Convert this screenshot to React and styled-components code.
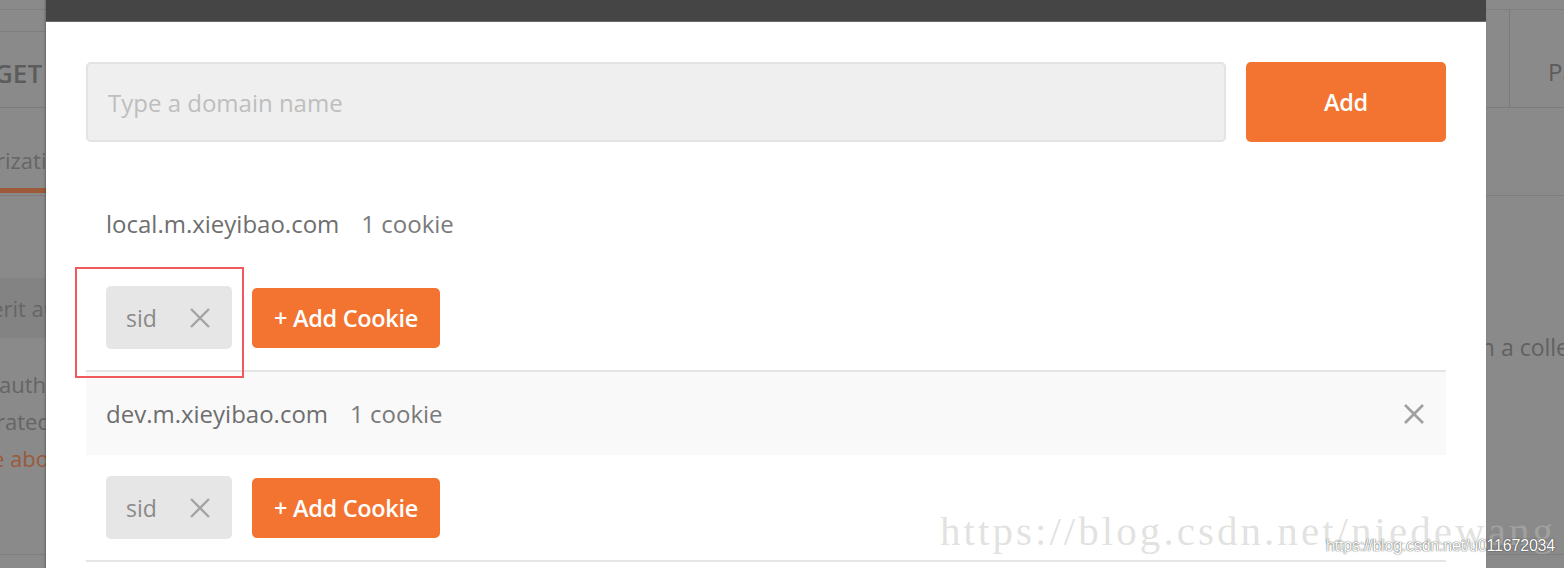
import React from 'react';
import styled, { createGlobalStyle } from 'styled-components';

const GlobalStyle = createGlobalStyle`
  html, body {
    margin: 0;
    padding: 0;
    overflow: hidden;
    background: #8a8a8a;
  }
  * {
    box-sizing: border-box;
  }
`;

const ORANGE = '#f27430';

const Page = styled.div`
  position: relative;
  width: 1564px;
  height: 568px;
  overflow: hidden;
  font-family: "Open Sans", "Liberation Sans", sans-serif;
`;

/* dimmed app behind the modal */
const AppBg = styled.div`
  display: flex;
  flex-direction: column;
  width: 100%;
  height: 100%;
  background: #8a8a8a;
  color: #5e5e5e;
  font-size: 22px;
`;

const TabStrip = styled.div`
  height: 10px;
  border-bottom: 1px solid #7e7e7e;
`;

const RequestBar = styled.div`
  height: 98px;
  display: flex;
  justify-content: space-between;
  border-bottom: 1px solid #7b7b7b;
`;

const MethodBox = styled.div`
  margin-top: 21px;
  width: 120px;
  border-top: 1px solid #7e7e7e;
  display: flex;
  align-items: center;
  padding-top: 6px;
  font-size: 26px;
  font-weight: 600;
  color: #5c5c5c;
  span {
    margin-left: -6px;
  }
`;

const ParamsButton = styled.div`
  width: 55px;
  border-left: 1px solid #7b7b7b;
  display: flex;
  align-items: center;
  padding-left: 38px;
  padding-top: 25px;
  font-size: 24px;
  color: #5c5c5c;
  white-space: nowrap;
`;

const TabsRow = styled.div`
  height: 88px;
  display: flex;
  border-bottom: 1px solid #7d7d7d;
`;

const Tab = styled.div`
  height: 85px;
  margin-left: -66px;
  padding: 0 20px 13px 0;
  display: flex;
  align-items: flex-end;
  border-bottom: 5px solid ${(p) => (p.$active ? '#9c5a38' : 'transparent')};
  color: #666;
  white-space: nowrap;
`;

const Content = styled.div`
  flex: 1;
  display: grid;
  grid-template-columns: 1475px 1fr;
  border-bottom: 1px solid #7e7e7e;
  margin-bottom: 13px;
`;

const LeftPane = styled.div`
  padding-top: 82px;
  display: flex;
  flex-direction: column;
`;

const InheritBand = styled.div`
  height: 60px;
  background: #838383;
  display: flex;
  align-items: center;
  margin-bottom: 28px;
  color: #666;
  white-space: nowrap;
  span {
    margin-left: -42px;
  }
`;

const HelpLine = styled.div`
  height: 37px;
  line-height: 37px;
  white-space: nowrap;
  color: ${(p) => (p.$link ? '#9b5a3a' : '#656565')};
  margin-left: ${(p) => p.$shift}px;
`;

const RightPane = styled.div`
  padding-top: 135px;
  white-space: nowrap;
  color: #616161;
  font-size: 23px;
`;

/* modal */
const Modal = styled.div`
  position: absolute;
  top: 0;
  left: 46px;
  width: 1440px;
  height: 600px;
  background: #fff;
  box-shadow: -1px 0 2px rgba(0, 0, 0, 0.25);
  display: flex;
  flex-direction: column;
`;

const ModalHeader = styled.div`
  height: 22px;
  background: #454545;
  border-bottom: 1px solid #6a6a6a;
`;

const ModalBody = styled.div`
  padding: 40px 40px 0;
`;

const AddRow = styled.div`
  display: flex;
  gap: 20px;
  height: 80px;
`;

const DomainInput = styled.input`
  flex: 1;
  height: 80px;
  background: #efefef;
  border: 2px solid #e3e3e3;
  border-radius: 5px;
  padding: 0 20px;
  font-family: inherit;
  font-size: 24px;
  color: #555;
  outline: none;
  &::placeholder {
    color: #bebebe;
  }
`;

const OrangeButton = styled.button`
  width: ${(p) => p.$width}px;
  height: ${(p) => p.$height}px;
  flex: none;
  border: none;
  border-radius: 5px;
  background: ${ORANGE};
  color: #fff;
  font-family: inherit;
  font-size: 23.5px;
  font-weight: 600;
  letter-spacing: -0.3px;
  cursor: pointer;
`;

const DomainList = styled.div`
  margin-top: 40px;
`;

const DomainSection = styled.div`
  border-bottom: 2px solid #e5e5e5;
`;

const DomainHeader = styled.div`
  height: 83px;
  display: flex;
  align-items: center;
  gap: 22px;
  padding: 0 21px 0 20px;
  background: ${(p) => (p.$hover ? '#f9f9f9' : '#fff')};
  color: #6e6e6e;
  font-size: 24px;
`;

const CookieCount = styled.span`
  color: #7a7a7a;
`;

const DomainClose = styled.span`
  margin-left: auto;
  display: flex;
`;

const CookieRow = styled.div`
  display: flex;
  align-items: center;
  gap: 20px;
  padding: 21px 20px;
`;

const ChipWrap = styled.div`
  position: relative;
`;

const Chip = styled.div`
  width: 126px;
  height: 63px;
  display: flex;
  align-items: center;
  justify-content: space-between;
  padding: 0 21px 0 20px;
  background: #e6e6e6;
  border-radius: 5px;
  color: #8a8a8a;
  font-size: 23px;
`;

const Annotation = styled.div`
  position: absolute;
  left: -31px;
  top: -19px;
  width: 169px;
  height: 111px;
  border: 2px solid #f05a5e;
  pointer-events: none;
`;

const Watermark = styled.div`
  position: absolute;
  left: 940px;
  top: 507px;
  font-family: "Liberation Serif", "DejaVu Serif", serif;
  font-size: 41px;
  letter-spacing: 3.05px;
  color: rgba(189, 189, 185, 0.45);
  white-space: nowrap;
  pointer-events: none;
`;

const SmallMark = styled.div`
  position: absolute;
  right: 9px;
  top: 537px;
  font-family: "Liberation Sans", Arial, sans-serif;
  font-size: 16px;
  letter-spacing: -0.2px;
  color: #fff;
  text-shadow: 0 0 1px rgba(0, 0, 0, 0.7), 0 0 2px rgba(0, 0, 0, 0.35);
  white-space: nowrap;
  pointer-events: none;
`;

const Cross = ({ size = 22, color = '#9b9b9b', width = 2.4 }) => (
  <svg width={size} height={size} viewBox="0 0 22 22">
    <path d="M2 2 L20 20 M20 2 L2 20" stroke={color} strokeWidth={width} strokeLinecap="butt" fill="none" />
  </svg>
);

const domains = [
  { name: 'local.m.xieyibao.com', cookies: ['sid'], hover: false, marked: true },
  { name: 'dev.m.xieyibao.com', cookies: ['sid'], hover: true, marked: false },
];

export default function App() {
  return (
    <Page>
      <GlobalStyle />
      <AppBg>
        <TabStrip />
        <RequestBar>
          <MethodBox><span>GET</span></MethodBox>
          <ParamsButton>Params</ParamsButton>
        </RequestBar>
        <TabsRow>
          <Tab $active>Authorization</Tab>
        </TabsRow>
        <Content>
          <LeftPane>
            <InheritBand><span>Inherit auth from parent</span></InheritBand>
            <HelpLine $shift={-1}>authorization header will be</HelpLine>
            <HelpLine $shift={-4}>rated when you send the request.</HelpLine>
            <HelpLine $shift={-8} $link>e about authorization</HelpLine>
          </LeftPane>
          <RightPane>in a collection</RightPane>
        </Content>
      </AppBg>

      <Modal>
        <ModalHeader />
        <ModalBody>
          <AddRow>
            <DomainInput placeholder="Type a domain name" />
            <OrangeButton $width={200} $height={80}>Add</OrangeButton>
          </AddRow>
          <DomainList>
            {domains.map((d) => (
              <DomainSection key={d.name}>
                <DomainHeader $hover={d.hover}>
                  <span>{d.name}</span>
                  <CookieCount>{d.cookies.length} cookie</CookieCount>
                  {d.hover && (
                    <DomainClose>
                      <Cross size={22} color="#a0a0a0" width={2.6} />
                    </DomainClose>
                  )}
                </DomainHeader>
                <CookieRow>
                  {d.cookies.map((c) => (
                    <ChipWrap key={c}>
                      <Chip>
                        <span>{c}</span>
                        <Cross size={22} color="#a3a3a3" width={2.4} />
                      </Chip>
                      {d.marked && <Annotation />}
                    </ChipWrap>
                  ))}
                  <OrangeButton $width={188} $height={60}>+ Add Cookie</OrangeButton>
                </CookieRow>
              </DomainSection>
            ))}
          </DomainList>
        </ModalBody>
      </Modal>

      <Watermark>https://blog.csdn.net/niedewang</Watermark>
      <SmallMark>https://blog.csdn.net/u011672034</SmallMark>
    </Page>
  );
}
